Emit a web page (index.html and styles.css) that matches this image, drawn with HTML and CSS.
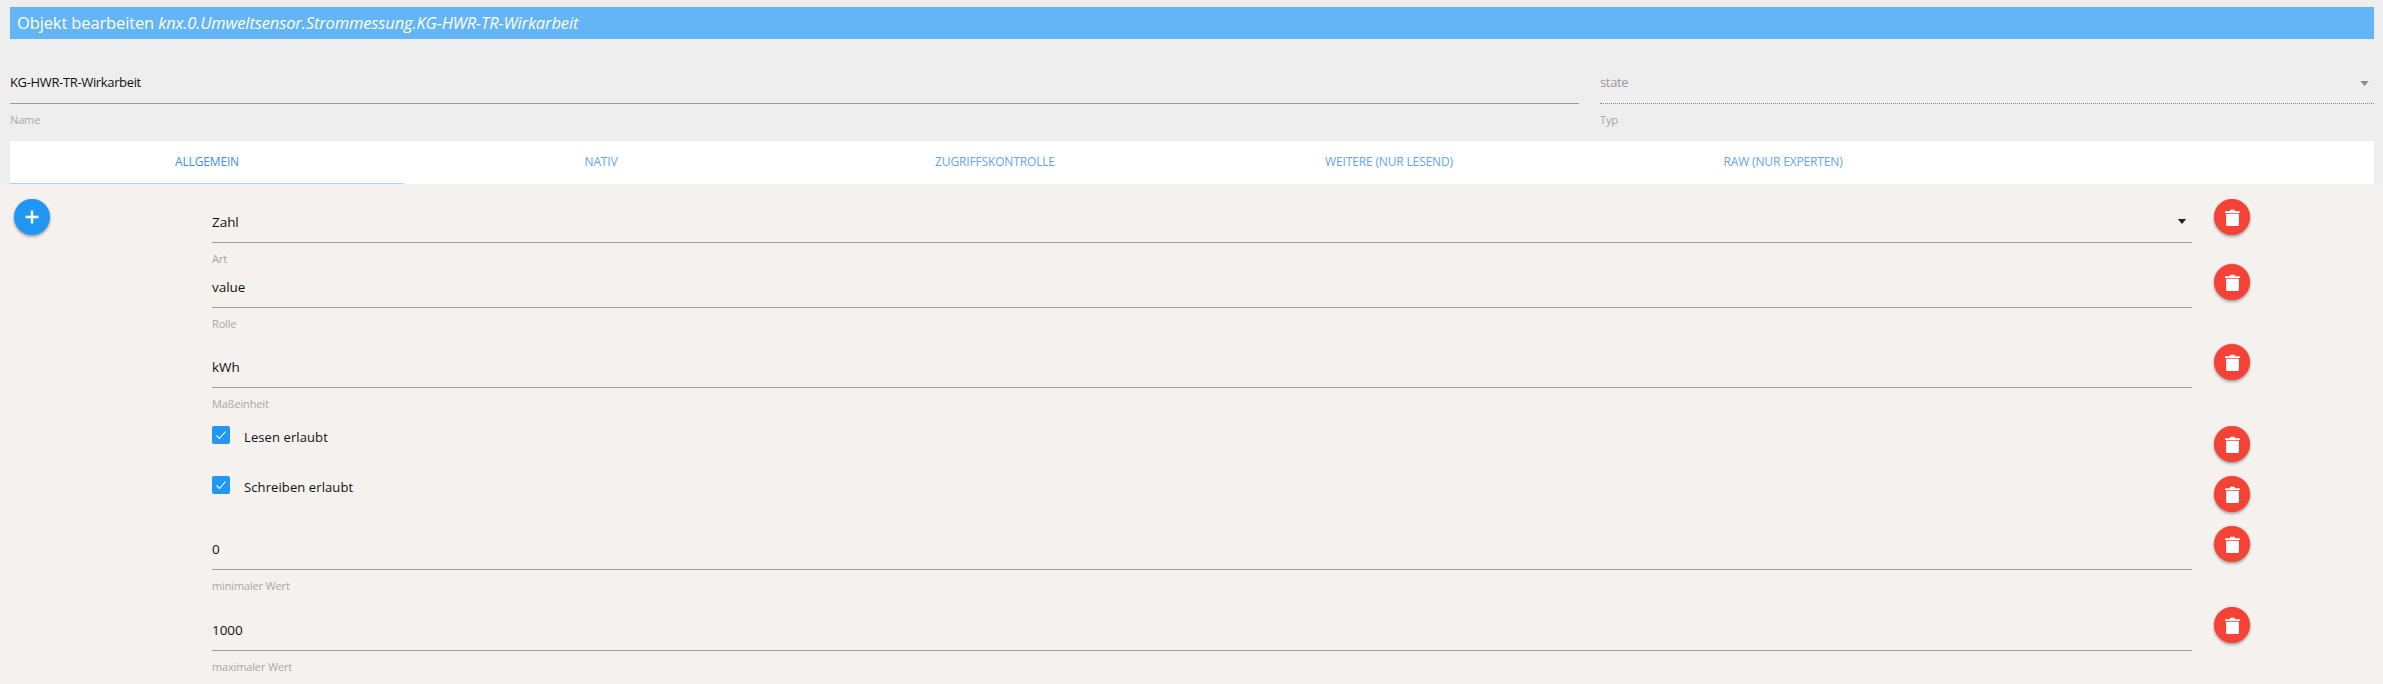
FILE: index.html
```html
<!DOCTYPE html>
<html lang="de">
<head>
<meta charset="utf-8">
<title>Objekt bearbeiten</title>
<link rel="stylesheet" href="styles.css">
</head>
<body>
<header class="title">Objekt bearbeiten <em>knx.0.Umweltsensor.Strommessung.KG-HWR-TR-Wirkarbeit</em></header>
<section class="top-fields">
  <div class="top-field name-field">
    <div class="value">KG-HWR-TR-Wirkarbeit</div>
    <div class="label">Name</div>
  </div>
  <div class="top-field type-field">
    <div class="value muted">state<svg class="caret" viewBox="0 0 10 6"><path d="M0 0h10L5 6z"/></svg></div>
    <div class="label">Typ</div>
  </div>
</section>
<nav class="tabs">
  <div class="tab active">ALLGEMEIN</div>
  <div class="tab">NATIV</div>
  <div class="tab">ZUGRIFFSKONTROLLE</div>
  <div class="tab">WEITERE (NUR LESEND)</div>
  <div class="tab">RAW (NUR EXPERTEN)</div>
  <div class="tab-rest"></div>
</nav>
<main class="content">
  <div class="add-col">
    <button class="fab add" aria-label="Hinzufügen"><svg viewBox="0 0 16 16"><path d="M8 1.5v13M1.5 8h13"/></svg></button>
  </div>
  <div class="rows">
    <div class="row row-first">
      <div class="field"><div class="value">Zahl<svg class="caret dark" viewBox="0 0 10 6"><path d="M0 0h10L5 6z"/></svg></div><div class="label">Art</div></div>
      <button class="fab del" aria-label="Löschen"><svg viewBox="0 0 14 16"><path d="M0 2.2h4.4L5 .8h4l.6 1.4H14v1.6H0z"/><path d="M1 4.4h12V15a1 1 0 0 1-1 1H2a1 1 0 0 1-1-1z"/></svg></button>
    </div>
    <div class="row row-short">
      <div class="field"><div class="value">value</div><div class="label">Rolle</div></div>
      <button class="fab del" aria-label="Löschen"><svg viewBox="0 0 14 16"><path d="M0 2.2h4.4L5 .8h4l.6 1.4H14v1.6H0z"/><path d="M1 4.4h12V15a1 1 0 0 1-1 1H2a1 1 0 0 1-1-1z"/></svg></button>
    </div>
    <div class="row row-long">
      <div class="field"><div class="value">kWh</div><div class="label">Maßeinheit</div></div>
      <button class="fab del" aria-label="Löschen"><svg viewBox="0 0 14 16"><path d="M0 2.2h4.4L5 .8h4l.6 1.4H14v1.6H0z"/><path d="M1 4.4h12V15a1 1 0 0 1-1 1H2a1 1 0 0 1-1-1z"/></svg></button>
    </div>
    <div class="row check-row">
      <div class="field check"><span class="box"><svg viewBox="0 0 18 18"><path d="M4.5 9.5l3 3 6-7"/></svg></span><span class="check-text">Lesen erlaubt</span></div>
      <button class="fab del" aria-label="Löschen"><svg viewBox="0 0 14 16"><path d="M0 2.2h4.4L5 .8h4l.6 1.4H14v1.6H0z"/><path d="M1 4.4h12V15a1 1 0 0 1-1 1H2a1 1 0 0 1-1-1z"/></svg></button>
    </div>
    <div class="row check-row">
      <div class="field check"><span class="box"><svg viewBox="0 0 18 18"><path d="M4.5 9.5l3 3 6-7"/></svg></span><span class="check-text">Schreiben erlaubt</span></div>
      <button class="fab del" aria-label="Löschen"><svg viewBox="0 0 14 16"><path d="M0 2.2h4.4L5 .8h4l.6 1.4H14v1.6H0z"/><path d="M1 4.4h12V15a1 1 0 0 1-1 1H2a1 1 0 0 1-1-1z"/></svg></button>
    </div>
    <div class="row row-mid">
      <div class="field"><div class="value">0</div><div class="label">minimaler Wert</div></div>
      <button class="fab del" aria-label="Löschen"><svg viewBox="0 0 14 16"><path d="M0 2.2h4.4L5 .8h4l.6 1.4H14v1.6H0z"/><path d="M1 4.4h12V15a1 1 0 0 1-1 1H2a1 1 0 0 1-1-1z"/></svg></button>
    </div>
    <div class="row">
      <div class="field"><div class="value">1000</div><div class="label">maximaler Wert</div></div>
      <button class="fab del" aria-label="Löschen"><svg viewBox="0 0 14 16"><path d="M0 2.2h4.4L5 .8h4l.6 1.4H14v1.6H0z"/><path d="M1 4.4h12V15a1 1 0 0 1-1 1H2a1 1 0 0 1-1-1z"/></svg></button>
    </div>
  </div>
</main>
</body>
</html>
```

FILE: styles.css
```css
* { box-sizing: border-box; }
html, body { margin: 0; height: 100%; overflow: hidden; }
body {
  background: #eeeeee;
  color: #111;
  font-family: "Open Sans", "Noto Sans", sans-serif;
  font-size: 13px;
  padding-top: 7px;
  display: flex;
  flex-direction: column;
}
.title {
  margin: 0 9px 0 10px;
  height: 32px;
  line-height: 31px;
  padding-left: 7px;
  background: #64b5f6;
  color: #fff;
  font-size: 16.5px;
  letter-spacing: -0.13px;
  white-space: nowrap;
}
.top-fields {
  display: flex;
  margin: 27px 9px 0 10px;
  gap: 21px;
}
.top-field { min-width: 0; }
.name-field { width: 1569px; }
.type-field { flex: 1; }
.value {
  position: relative;
  border-bottom: 1px solid #9e9e9e;
  line-height: 24px;
}
.top-field .value { height: 38px; padding-top: 4px; letter-spacing: -0.35px; }
.muted { color: #9a9a9a; border-bottom: 1px dotted #8a8a8a; }
.label {
  margin-top: 8px;
  height: 16px;
  line-height: 16px;
  font-size: 11px;
  color: #a8a8a8;
  letter-spacing: -0.15px;
}
.caret {
  position: absolute;
  right: 5px;
  top: 15px;
  width: 9px;
  height: 5px;
  fill: #8a8a8a;
}
.caret.dark { fill: #222; right: 5px; top: 20px; width: 10px; height: 5px; }
.tabs {
  display: flex;
  margin: 13px 9px 0 10px;
  height: 43px;
  background: #fff;
}
.tab {
  width: 394px;
  height: 43px;
  line-height: 41px;
  text-align: center;
  font-size: 12px;
  letter-spacing: -0.15px;
  color: #64a5f0;
}
.tab.active { border-bottom: 1px solid #a9d4f5; color: #3f8fe8; }
.tab-rest { flex: 1; }
.content {
  flex: 1;
  display: flex;
  background: #f4f1ee;
  min-height: 0;
  padding-top: 15px;
}
.add-col { width: 212px; padding-left: 14px; flex: none; }
.rows { flex: 1; min-width: 0; }
.row { display: flex; align-items: flex-start; gap: 22px; }
.row-first { height: 65px; }
.row-short { height: 80px; }
.row-long { height: 82px; }
.row-mid { height: 81px; }
.check-row { height: 50px; }
.field { width: 1980px; flex: none; }
.row .value {
  height: 44px;
  padding-top: 11px;
  font-size: 13.5px;
  letter-spacing: -0.05px;
}
.check {
  display: flex;
  align-items: center;
  gap: 14px;
  height: 18px;
  letter-spacing: 0.1px;
}
.check-text { padding-top: 3px; }
.box {
  width: 18px;
  height: 18px;
  border-radius: 2px;
  background: #2196f3;
  flex: none;
}
.box svg { display: block; width: 18px; height: 18px; fill: none; stroke: #fff; stroke-width: 1.1; }
.fab {
  flex: none;
  width: 36px;
  height: 36px;
  border: 0;
  padding: 0;
  border-radius: 50%;
  display: flex;
  align-items: center;
  justify-content: center;
  box-shadow: 0 2px 3px rgba(0,0,0,.3), 0 0 2px rgba(0,0,0,.15);
}
.add { background: #2196f3; }
.add svg { width: 16px; height: 16px; fill: none; stroke: #fff; stroke-width: 2.4; }
.del { background: #f44336; }
.del svg { width: 15px; height: 17px; fill: #fff; }
```
